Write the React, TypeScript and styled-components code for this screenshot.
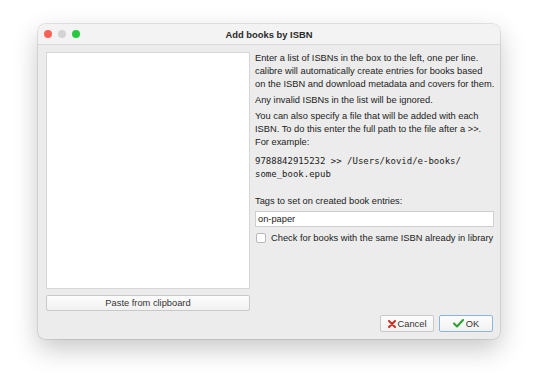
import React from 'react';
import styled, { createGlobalStyle } from 'styled-components';

const GlobalStyle = createGlobalStyle`
  html, body {
    margin: 0;
    padding: 0;
    background: #ffffff;
  }
  body {
    font-family: 'Liberation Sans', Arial, sans-serif;
    font-size: 9.3px;
    color: #222222;
  }
`;

const Page = styled.div`
  width: 540px;
  height: 390px;
  padding: 24px 0 0 38px;
  box-sizing: border-box;
`;

const Window = styled.div`
  width: 462px;
  height: 315px;
  border-radius: 7px;
  background: #ececec;
  box-shadow: 0 0 0 0.5px rgba(0, 0, 0, 0.18), 0 10px 26px rgba(0, 0, 0, 0.22);
  display: flex;
  flex-direction: column;
  overflow: hidden;
`;

const TitleBar = styled.div`
  height: 20px;
  flex-shrink: 0;
  background: #f3f3f3;
  border-bottom: 1px solid #d9d9d9;
  display: flex;
  align-items: center;
  position: relative;
  padding-left: 6px;
`;

const Lights = styled.div`
  display: flex;
  gap: 6px;
`;

const Light = styled.span<{ color: string }>`
  width: 8px;
  height: 8px;
  border-radius: 50%;
  background: ${(p) => p.color};
`;

const Title = styled.div`
  position: absolute;
  left: 0;
  right: 0;
  text-align: center;
  font-weight: bold;
  font-size: 9.4px;
  color: #2a2a2a;
`;

const Body = styled.div`
  flex: 1;
  display: flex;
  flex-direction: column;
  padding: 7px 7px 7px 8px;
`;

const Main = styled.div`
  flex: 1;
  display: grid;
  grid-template-columns: 204px 1fr;
  gap: 5px;
`;

const LeftCol = styled.div`
  display: flex;
  flex-direction: column;
  gap: 6px;
`;

const ListBox = styled.div`
  flex: 1;
  background: #ffffff;
  border: 1px solid #d6d6d6;
`;

const PushButton = styled.div<{ $default?: boolean }>`
  height: 16px;
  box-sizing: border-box;
  display: flex;
  align-items: center;
  justify-content: center;
  gap: 2px;
  background: linear-gradient(#fdfdfd, #f1f1f1);
  border: 1px solid ${(p) => (p.$default ? '#8fb3dc' : '#c9c9c9')};
  border-radius: 2px;
  color: #333333;
`;

const RightCol = styled.div`
  display: flex;
  flex-direction: column;
  white-space: nowrap;
`;

const Para = styled.p`
  margin: 0 0 3px 0;
  line-height: 13px;
`;

const Mono = styled.p`
  margin: 3px 0 0 0;
  line-height: 13px;
  font-family: 'DejaVu Sans Mono', 'Liberation Mono', monospace;
  font-size: 9px;
`;

const Label = styled.div`
  margin-top: 14px;
  line-height: 13px;
`;

const Input = styled.div`
  margin-top: 3px;
  height: 16px;
  box-sizing: border-box;
  background: #ffffff;
  border: 1px solid #cfcfcf;
  display: flex;
  align-items: center;
  padding-left: 2px;
`;

const CheckRow = styled.div`
  margin-top: 6px;
  display: flex;
  align-items: center;
  gap: 5px;
  padding-left: 1px;
`;

const Box = styled.span`
  width: 8px;
  height: 8px;
  border: 1px solid #b8b8b8;
  border-radius: 2px;
  background: #ffffff;
`;

const ButtonRow = styled.div`
  margin-top: 4px;
  display: flex;
  justify-content: flex-end;
  gap: 5px;
`;

const DialogButton = styled(PushButton)`
  height: 17px;
  width: 54px;
`;

const CrossIcon = () => (
  <svg width="8" height="8" viewBox="0 0 8 8">
    <path d="M1 1 L7 7 M7 1 L1 7" stroke="#d52b1e" strokeWidth="2" strokeLinecap="round" />
  </svg>
);

const CheckIcon = () => (
  <svg width="11" height="9" viewBox="0 0 11 9">
    <path d="M1 4.5 L4 7.5 L10 1" stroke="#27a12f" strokeWidth="2" fill="none" strokeLinecap="round" strokeLinejoin="round" />
  </svg>
);

export default function App() {
  return (
    <Page>
      <GlobalStyle />
      <Window>
        <TitleBar>
          <Lights>
            <Light color="#fe5f57" />
            <Light color="#d4d4d4" />
            <Light color="#28c840" />
          </Lights>
          <Title>Add books by ISBN</Title>
        </TitleBar>
        <Body>
          <Main>
            <LeftCol>
              <ListBox />
              <PushButton>Paste from clipboard</PushButton>
            </LeftCol>
            <RightCol>
              <Para>
                Enter a list of ISBNs in the box to the left, one per line.
                <br />
                calibre will automatically create entries for books based
                <br />
                on the ISBN and download metadata and covers for them.
              </Para>
              <Para>Any invalid ISBNs in the list will be ignored.</Para>
              <Para>
                You can also specify a file that will be added with each
                <br />
                ISBN. To do this enter the full path to the file after a &gt;&gt;.
                <br />
                For example:
              </Para>
              <Mono>
                9788842915232 &gt;&gt; /Users/kovid/e-books/
                <br />
                some_book.epub
              </Mono>
              <Label>Tags to set on created book entries:</Label>
              <Input>on-paper</Input>
              <CheckRow>
                <Box />
                <span>Check for books with the same ISBN already in library</span>
              </CheckRow>
            </RightCol>
          </Main>
          <ButtonRow>
            <DialogButton>
              <CrossIcon />
              Cancel
            </DialogButton>
            <DialogButton $default>
              <CheckIcon />
              OK
            </DialogButton>
          </ButtonRow>
        </Body>
      </Window>
    </Page>
  );
}
